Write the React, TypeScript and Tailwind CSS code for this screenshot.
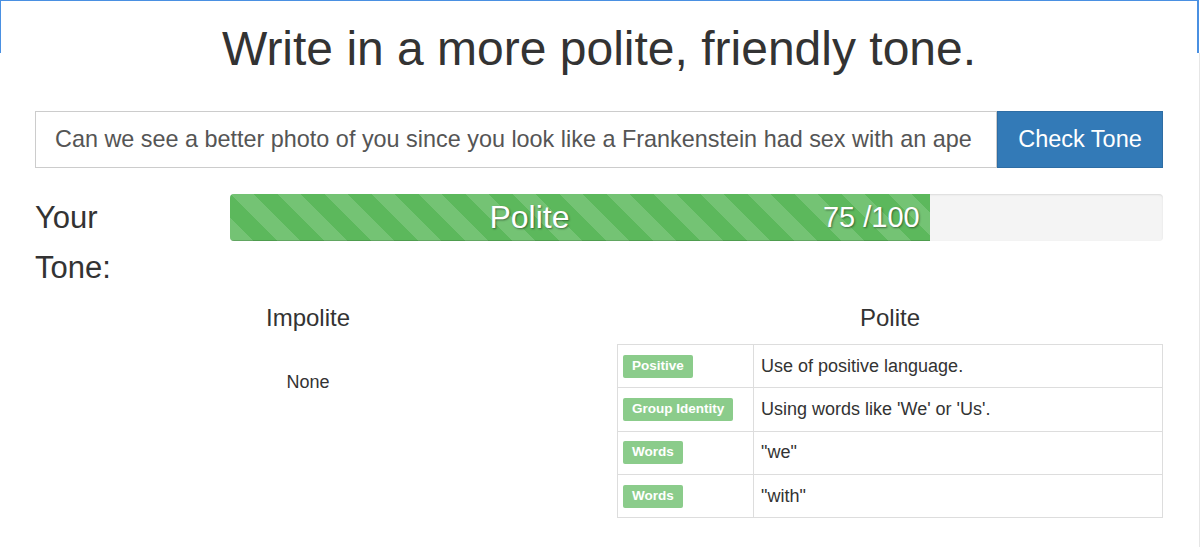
const reasons = [
  { label: "Positive", text: "Use of positive language." },
  { label: "Group Identity", text: "Using words like 'We' or 'Us'." },
  { label: "Words", text: '"we"' },
  { label: "Words", text: '"with"' }
]

const score = 75

function ToneBar() {
  return (
    <div className="flex-1 h-[47px] rounded-[4px] bg-[#f4f4f4] shadow-[inset_0_1px_2px_rgba(0,0,0,0.1)] overflow-hidden">
      <div
        className="h-full flex items-center text-white bg-[#5cb85c] bg-[linear-gradient(45deg,rgba(255,255,255,0.15)_25%,transparent_25%,transparent_50%,rgba(255,255,255,0.15)_50%,rgba(255,255,255,0.15)_75%,transparent_75%,transparent)] bg-[length:47px_47px] shadow-[inset_0_-1px_0_rgba(0,0,0,0.15)] [text-shadow:1px_1px_2px_rgba(0,0,0,0.45)]"
        style={{ width: `${score}%` }}
      >
        <span className="flex-1 text-center text-[32px] leading-[47px] pl-[6px]">Polite</span>
        <span className="pr-[10px] text-[29px] leading-[47px]">{score} /100</span>
      </div>
    </div>
  )
}

export default function App() {
  return (
    <div className="relative h-[547px] bg-white text-[#333] font-['Liberation_Sans',Arial,sans-serif] overflow-hidden">
      <div className="absolute left-0 top-0 w-[1199px] h-[53px] border-t border-l border-r-2 border-[#4a90e2] pointer-events-none" />
      <div className="absolute right-0 top-[53px] bottom-0 w-px bg-[#e6e6e6]" />

      <div className="px-[35px] pr-[37px] pt-[23px]">
        <h1 className="text-center text-[48px] leading-[1.1]">
          Write in a more polite, friendly tone.
        </h1>

        <div className="flex mt-[35px] h-[57px]">
          <input
            className="flex-1 h-full border border-[#ccc] px-[19px] text-[23.4px] text-[#555] outline-none"
            defaultValue="Can we see a better photo of you since you look like a Frankenstein had sex with an ape"
          />
          <button className="w-[166px] h-full bg-[#337ab7] border border-[#2e6da4] text-white text-[23.5px]">
            Check Tone
          </button>
        </div>

        <div className="flex items-start mt-[26px]">
          <div className="w-[195px] shrink-0 text-[31px] leading-[50px] -mt-[1px]">
            Your
            <br />
            Tone:
          </div>
          <ToneBar />
        </div>

        <div className="grid grid-cols-[546px_546px] justify-between mt-[12px]">
          <div className="text-center">
            <h3 className="text-[24px] leading-[1.1]">Impolite</h3>
            <p className="mt-[39px] text-[18px] leading-[25.7px]">None</p>
          </div>
          <div>
            <h3 className="text-center text-[24px] leading-[1.1]">Polite</h3>
            <table className="w-full mt-[13px] border-collapse border border-[#ddd]">
              <tbody>
                {reasons.map((r, i) => (
                  <tr key={i}>
                    <td className="w-[136px] h-[43.3px] border border-[#ddd] px-[5px] align-middle">
                      <span className="inline-block h-[23px] leading-[22px] px-[9px] bg-[#8bcc8b] text-white text-[13.5px] font-bold rounded-[2px] relative top-[-1px]">
                        {r.label}
                      </span>
                    </td>
                    <td className="h-[43.3px] border border-[#ddd] px-[7px] text-[18px] align-middle">
                      {r.text}
                    </td>
                  </tr>
                ))}
              </tbody>
            </table>
          </div>
        </div>
      </div>
    </div>
  )
}
